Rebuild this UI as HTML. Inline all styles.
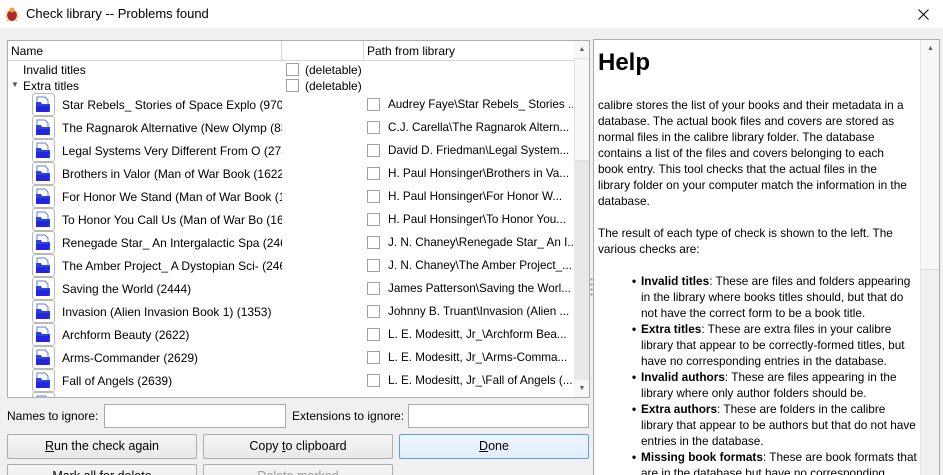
<!DOCTYPE html>
<html><head><style>
*{box-sizing:border-box;margin:0;padding:0}
html,body{width:943px;height:475px;overflow:hidden}
body{background:#f0f0f0;font-family:"Liberation Sans",sans-serif;font-size:12px;color:#000;position:relative}
.a{position:absolute}
.title{left:0;top:0;width:943px;height:28px;background:#fff}
.tree{left:7px;top:40px;width:583px;height:358px;background:#fff;border:1px solid #adadad;overflow:hidden}
.hdr{left:0;top:0;height:20px;width:566px;background:#fff;border-bottom:1px solid #d5d5d5}
.cb{width:13px;height:13px;border:1px solid #a0a0a0;background:#fff}
.row{position:absolute;left:0;width:566px;height:23px;white-space:nowrap}
.ic{position:absolute;left:24px;top:0;width:23px;height:23px;border:1px solid #b8b8b8;border-radius:3px;background:#fff}
.btn{height:25px;border:1px solid #adadad;border-radius:2px;background:linear-gradient(#f5f5f5,#e8e8e8);text-align:center;line-height:23px;font-size:12.5px}
.inp{height:24px;border:1px solid #a9a9a9;background:#fff}
.help{left:593px;top:39px;width:347px;height:436px;background:#fff;border:1px solid #adadad;border-bottom:none;overflow:hidden;font-size:11.8px;line-height:16px}
ul{list-style:none}
li{position:relative;padding-left:7px}
li:before{content:"•";position:absolute;left:-2px;font-weight:bold}
</style></head><body>
<div class="a title">
<svg class="a" style="left:4px;top:6px" width="16" height="16" viewBox="0 0 16 16"><ellipse cx="8" cy="9.5" rx="5" ry="5.5" fill="#b0282a"/><circle cx="8" cy="4" r="2.5" fill="#e8a43a"/><path d="M2 7h2M12 7h2M1.5 11h2.5M12 11h2.5M3 15l2-2M13 15l-2-2" stroke="#e8a43a" stroke-width="1.2"/></svg>
<div class="a" style="left:26px;top:6px;font-size:13px">Check library -- Problems found</div>
<svg class="a" style="left:918px;top:9px" width="11" height="11" viewBox="0 0 11 11"><path d="M0.5 0.5l10 10M10.5 0.5l-10 10" stroke="#000" stroke-width="1"/></svg>
</div>

<div class="a tree">
<div class="a hdr"><span class="a" style="left:3px;top:3px">Name</span><div class="a" style="left:273px;top:0;width:1px;height:20px;background:#d5d5d5"></div><div class="a" style="left:355px;top:0;width:1px;height:20px;background:#d5d5d5"></div><span class="a" style="left:359px;top:3px">Path from library</span></div>
<div class="a" style="left:566px;top:0;width:16px;height:356px;background:#e8e8e8"><div class="a" style="left:0;top:17px;width:16px;height:103px;background:#f7f7f7;border:1px solid #e0e0e0"></div><div class="a" style="left:0;top:0;width:16px;height:17px;background:#f7f7f7;text-align:center;font-size:7px;line-height:17px;color:#606060">▲</div><div class="a" style="left:0;bottom:0;width:16px;height:17px;background:#f7f7f7;text-align:center;font-size:7px;line-height:17px;color:#606060">▼</div></div>
<div class="a" style="left:15px;top:22px">Invalid titles</div><div class="a cb" style="left:278px;top:22px"></div><div class="a" style="left:297px;top:22px">(deletable)</div>
<div class="a" style="left:3px;top:39px;font-size:8px;color:#555">▼</div><div class="a" style="left:15px;top:38px">Extra titles</div><div class="a cb" style="left:278px;top:38px"></div><div class="a" style="left:297px;top:38px">(deletable)</div>
<div id="rows"></div>
</div>

<div class="a" style="left:7px;top:409px">Names to ignore:</div>
<div class="a inp" style="left:104px;top:404px;width:182px"></div>
<div class="a" style="left:292px;top:409px">Extensions to ignore:</div>
<div class="a inp" style="left:408px;top:404px;width:181px"></div>
<div class="a btn" style="left:7px;top:434px;width:190px"><u>R</u>un the check again</div>
<div class="a btn" style="left:203px;top:434px;width:190px">Copy <u>t</u>o clipboard</div>
<div class="a btn" style="left:399px;top:434px;width:190px;border-color:#5a9fe0;background:linear-gradient(#eef5fd,#e2eefb)"><u>D</u>one</div>
<div class="a" style="left:0;top:464px;width:590px;height:11px;overflow:hidden">
<div class="a btn" style="left:7px;top:0;width:190px">Mark all for delete</div>
<div class="a btn" style="left:203px;top:0;width:190px;color:#999">Delete marked</div>
</div>
<div class="a" style="left:590px;top:277px;width:3px;height:20px;background:radial-gradient(circle,#999 1px,transparent 1.3px) 0 0/3px 5px"></div>

<div class="a help">
<div class="a" style="left:326px;top:0;width:20px;height:436px;background:#f0f0f0;border-left:1px solid #e6e6e6"><div class="a" style="left:0;top:0;width:19px;height:230px;background:#f7f7f7;border-bottom:1px solid #ddd;text-align:center;font-size:7px;line-height:17px;color:#606060">▲</div></div>
<div style="padding:8px 0 0 4px;width:318px">
<div style="font-size:24px;font-weight:bold;line-height:30px;margin-bottom:19px">Help</div>
<p>calibre stores the list of your books and their metadata in a database. The actual book files and covers are stored as normal files in the calibre library folder. The database contains a list of the files and covers belonging to each book entry. This tool checks that the actual files in the library folder on your computer match the information in the database.</p>
<p style="margin-top:16px">The result of each type of check is shown to the left. The various checks are:</p>
<ul style="margin:16px -6px 0 36px">
<li><b>Invalid titles</b>: These are files and folders appearing in the library where books titles should, but that do not have the correct form to be a book title.</li>
<li><b>Extra titles</b>: These are extra files in your calibre library that appear to be correctly-formed titles, but have no corresponding entries in the database.</li>
<li><b>Invalid authors</b>: These are files appearing in the library where only author folders should be.</li>
<li><b>Extra authors</b>: These are folders in the calibre library that appear to be authors but that do not have entries in the database.</li>
<li><b>Missing book formats</b>: These are book formats that are in the database but have no corresponding format file in the book's folder.</li>
</ul></div></div>

<script>
var d=[["Star Rebels_ Stories of Space Explo (970)","Audrey Faye\\Star Rebels_ Stories ..."],["The Ragnarok Alternative (New Olymp (83","C.J. Carella\\The Ragnarok Altern..."],["Legal Systems Very Different From O (2785","David D. Friedman\\Legal System..."],["Brothers in Valor (Man of War Book (1622)","H. Paul Honsinger\\Brothers in Va..."],["For Honor We Stand (Man of War Book (16","H. Paul Honsinger\\For Honor W..."],["To Honor You Call Us (Man of War Bo (162","H. Paul Honsinger\\To Honor You..."],["Renegade Star_ An Intergalactic Spa (2460)","J. N. Chaney\\Renegade Star_ An I..."],["The Amber Project_ A Dystopian Sci- (2467","J. N. Chaney\\The Amber Project_..."],["Saving the World (2444)","James Patterson\\Saving the Worl..."],["Invasion (Alien Invasion Book 1) (1353)","Johnny B. Truant\\Invasion (Alien ..."],["Archform Beauty (2622)","L. E. Modesitt, Jr_\\Archform Bea..."],["Arms-Commander (2629)","L. E. Modesitt, Jr_\\Arms-Comma..."],["Fall of Angels (2639)","L. E. Modesitt, Jr_\\Fall of Angels (..."],["",""]];
var h="",ic='<svg width="21" height="21" viewBox="0 0 21 21" style="position:absolute;left:0;top:0"><path d="M4 3h8l3 3v5H4z" fill="#fff" stroke="#5b7fd6"/><path d="M3 8h5l1 2h8v8H3z" fill="#2b45d6"/><path d="M3 12h14l-2 6H3z" fill="#2323e0"/></svg>';
d.forEach(function(r,i){var t=52+i*23;h+='<div class="row" style="top:'+t+'px"><div class="ic">'+ic+'</div><div class="a" style="left:54px;top:5px;width:220px;overflow:hidden">'+r[0]+'</div><div class="a cb" style="left:359px;top:5px"></div><div class="a" style="left:380px;top:5px;width:185px;overflow:hidden;font-size:11.7px">'+r[1]+'</div></div>';});
document.getElementById("rows").innerHTML=h;
</script>
</body></html>
